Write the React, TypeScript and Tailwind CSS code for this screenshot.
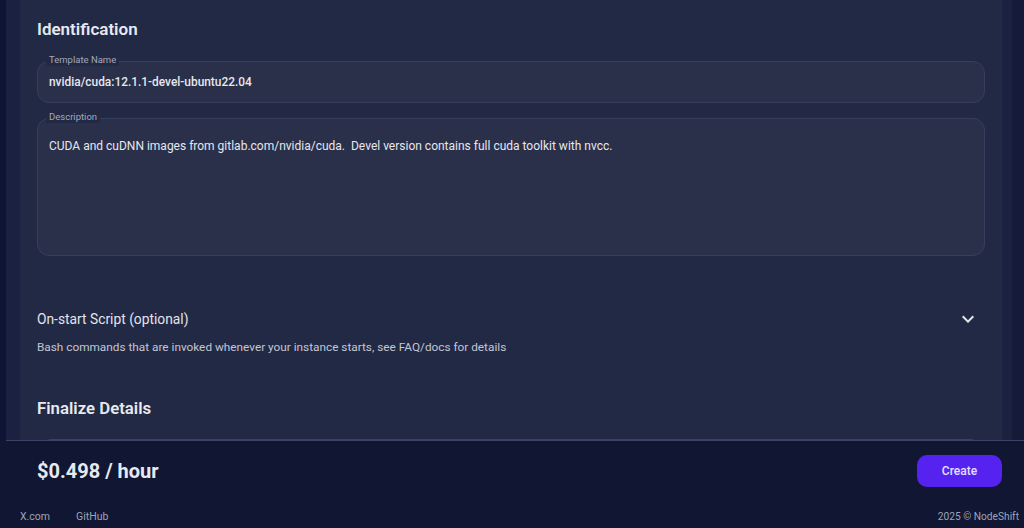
import React from 'react';

function OutlinedField({ label, value, tall }: { label: string; value: string; tall?: boolean }) {
  return (
    <div
      className={`relative rounded-xl border border-[#373e5c] bg-[#2a3049] px-[11px] ${
        tall ? 'h-[138px] pt-[19px]' : 'h-[42px] flex items-center'
      }`}
    >
      <span className="absolute -top-[8px] left-[8px] bg-[#222944] px-[3px] text-[9.5px] leading-[12px] text-[#a3a8bd]">
        {label}
      </span>
      <p
        className={`whitespace-pre-wrap text-[#e6e7ee] ${
          tall ? 'text-[12px] leading-[16px]' : 'text-[11.9px] font-medium leading-[18px]'
        }`}
      >
        {value}
      </p>
    </div>
  );
}

export default function App() {
  return (
    <div
      className="flex h-[528px] w-[1024px] flex-col overflow-hidden bg-[#111733]"
      style={{ fontFamily: 'Roboto, "Noto Sans", sans-serif' }}
    >
      <div className="flex h-[440px] shrink-0">
        <div className="w-[6px] bg-[#0f1535]" />
        <div className="flex flex-1 bg-[#1b2140] pl-[14px] pr-[10px]">
          <div className="flex-1 overflow-hidden bg-[#222944] px-[17px] pt-[15px]">
            <h2 className="text-[17px] font-semibold leading-7 text-[#e8e9f0]">Identification</h2>

            <div className="mt-[18px]">
              <OutlinedField label="Template Name" value="nvidia/cuda:12.1.1-devel-ubuntu22.04" />
            </div>
            <div className="mt-[15px]">
              <OutlinedField
                tall
                label="Description"
                value="CUDA and cuDNN images from gitlab.com/nvidia/cuda.  Devel version contains full cuda toolkit with nvcc."
              />
            </div>

            <div className="mt-[51px] flex items-center justify-between">
              <span className="text-[13.8px] leading-5 text-[#e3e4ea]">On-start Script (optional)</span>
              <svg viewBox="0 0 24 24" className="mr-[5px] h-6 w-6 fill-[#e6e7ee]">
                <path d="M16.59 8.59 12 13.17 7.41 8.59 6 10l6 6 6-6z" />
              </svg>
            </div>
            <p className="mt-[8px] text-[11.8px] leading-4 text-[#c3c6d3]">
              Bash commands that are invoked whenever your instance starts, see FAQ/docs for details
            </p>

            <h2 className="mt-[39px] text-[16.8px] font-semibold leading-7 text-[#e8e9f0]">Finalize Details</h2>
            <div className="mx-[3px] mt-[17px] h-[20px] rounded-t-xl border-t border-[#3a4162] bg-[#2a3049]" />
          </div>
        </div>
        <div className="w-[12px] bg-[#141a38]" />
      </div>

      <footer className="flex flex-1 flex-col">
        <div className="ml-[6px] h-px bg-[#3b4265]" />
        <div className="flex items-center justify-between pl-[37px] pr-[22px] pt-[14px]">
          <span className="text-[20px] font-bold leading-7 text-[#e8e9f0]">$0.498 / hour</span>
          <button className="h-[32px] w-[85px] rounded-[10px] bg-[#5622ef] text-[12px] font-medium text-[#e4e0ff]">
            Create
          </button>
        </div>
        <div className="mt-[22px] flex items-center justify-between pl-[20px] pr-[5px] text-[10.5px] leading-4 text-[#9ea3b8]">
          <div className="flex gap-[26px]">
            <span>X.com</span>
            <span>GitHub</span>
          </div>
          <span className="text-[10.2px]">2025 © NodeShift</span>
        </div>
      </footer>
    </div>
  );
}
